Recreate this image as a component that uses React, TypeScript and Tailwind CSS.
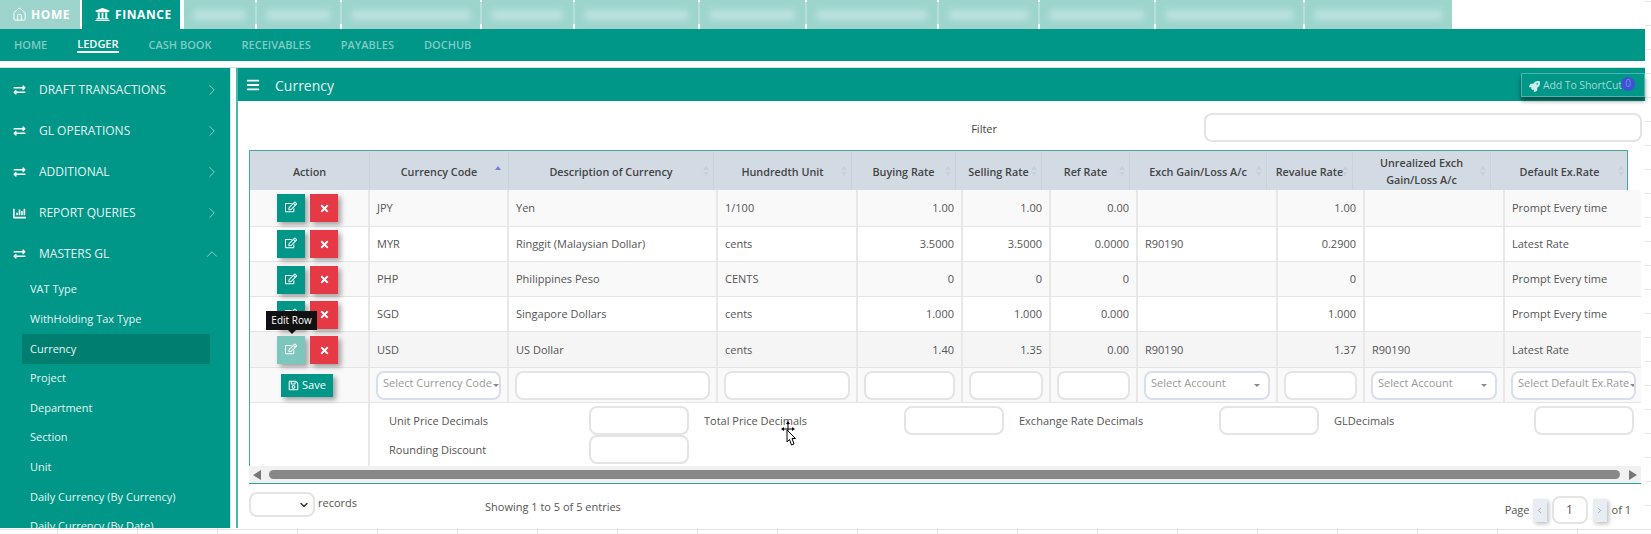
import React from "react";
import { FaBars, FaChartBar, FaExchangeAlt, FaRegEdit, FaRegSave, FaRocket, FaTimes, FaUniversity } from "react-icons/fa";
import { ChevronDown, ChevronLeft, ChevronRight, ChevronUp, House } from "lucide-react";

const navItems = ["HOME", "LEDGER", "CASH BOOK", "RECEIVABLES", "PAYABLES", "DOCHUB"];
const blurredTabs = [71, 83, 138, 91, 123, 105, 130, 99, 114, 147, 147];

const menuItems = [
  { label: "DRAFT TRANSACTIONS", chart: false },
  { label: "GL OPERATIONS", chart: false },
  { label: "ADDITIONAL", chart: false },
  { label: "REPORT QUERIES", chart: true },
];
const subItems = ["VAT Type", "WithHolding Tax Type", "Currency", "Project", "Department", "Section", "Unit", "Daily Currency (By Currency)", "Daily Currency (By Date)"];

const headers = ["Action", "Currency Code", "Description of Currency", "Hundredth Unit", "Buying Rate", "Selling Rate", "Ref Rate", "Exch Gain/Loss A/c", "Revalue Rate", "Unrealized Exch Gain/Loss A/c", "Default Ex.Rate"];

const rows = [
  { h: "h-[37px]", bg: "bg-[#f9f9f9]", btn: "", cells: ["JPY", "Yen", "1/100", "1.00", "1.00", "0.00", "", "1.00", "", "Prompt Every time"] },
  { h: "h-[35px]", bg: "bg-white", btn: "", cells: ["MYR", "Ringgit (Malaysian Dollar)", "cents", "3.5000", "3.5000", "0.0000", "R90190", "0.2900", "", "Latest Rate"] },
  { h: "h-[35px]", bg: "bg-[#f9f9f9]", btn: "pt-[1px]", cells: ["PHP", "Philippines Peso", "CENTS", "0", "0", "0", "", "0", "", "Prompt Every time"] },
  { h: "h-[35px]", bg: "bg-white", btn: "pt-[1px]", cells: ["SGD", "Singapore Dollars", "cents", "1.000", "1.000", "0.000", "", "1.000", "", "Prompt Every time"] },
  { h: "h-[36px]", bg: "bg-[#f5f5f5]", btn: "pt-[1px]", cells: ["USD", "US Dollar", "cents", "1.40", "1.35", "0.00", "R90190", "1.37", "R90190", "Latest Rate"] },
];
const numeric = [3, 4, 5, 7];

const inputRow = [
  "Select Currency Code", "", "", "", "", "", "Select Account", "", "Select Account", "Select Default Ex.Rate",
];

const decimals = ["Unit Price Decimals", "Total Price Decimals", "Exchange Rate Decimals", "GLDecimals"];

const TextBox = ({ className = "" }: { className?: string }) => (
  <div className={`h-[29px] rounded-[8px] border-2 border-[#e4e4e4] bg-white ${className}`} />
);

const SortIcon = ({ active }: { active?: boolean }) => (
  <svg width="6" height="12" viewBox="0 0 6 12" className={`absolute top-[14px] ${active ? "right-[7px]" : "right-[4px]"}`}>
    <path d="M3 1 L6 5 L0 5 Z" fill={active ? "#7a80d8" : "#c6d0da"} />
    {!active && <path d="M3 11 L6 7 L0 7 Z" fill="#c6d0da" />}
  </svg>
);

const ActionButtons = ({ faded, className = "" }: { faded?: boolean; className?: string }) => (
  <div className={`flex h-full items-center gap-[5px] pl-[27px] ${className}`}>
    <button className={`flex h-[28px] w-[28px] items-center justify-center text-white shadow-[3px_3px_5px_rgba(0,0,0,0.35)] ${faded ? "bg-[#7cc6bd]" : "bg-[#009688]"}`}>
      <FaRegEdit className="mb-[2px] text-[12px]" />
    </button>
    <button className="flex h-[28px] w-[28px] items-center justify-center bg-[#e63946] text-white shadow-[3px_3px_5px_rgba(0,0,0,0.35)]">
      <FaTimes className="text-[11px]" />
    </button>
  </div>
);

const MoveCursor = () => (
  <svg width="20" height="26" viewBox="0 0 20 26" className="absolute left-[778px] top-[421px]">
    <path d="M10 0 L12 3 H10.5 V7.5 H14 V6 L17 8 L14 10 V8.5 H10.5 V10 H9.5 V8.5 H6 V10 L3 8 L6 6 V7.5 H9.5 V3 H8 Z" fill="#000" />
    <path d="M9 9 V21 L11.5 18.5 L13.5 24 L16 23 L14 17.5 L17.5 17.5 Z" fill="#fff" stroke="#000" strokeWidth="1" />
  </svg>
);

export default function App() {
  return (
    <div className="relative h-[534px] w-[1651px] overflow-hidden bg-white bg-[linear-gradient(#e4e4e4_1px,transparent_1px),linear-gradient(90deg,#e4e4e4_1px,transparent_1px)] bg-[size:80px_24px] bg-[position:57px_1px] font-['Open_Sans',sans-serif] text-[11px] text-[#555]">
      <div className="flex h-[528px] w-[1645px] flex-col bg-white">
        {/* top tabs */}
        <div className="flex h-[29px] shrink-0 bg-white">
          <div className="flex w-[80px] items-center gap-[4px] bg-[#9dd5cd] pl-[12px] text-[12px] font-bold tracking-[0.6px] text-white">
            <House size={15} strokeWidth={1.5} />
            HOME
          </div>
          <div className="ml-[2px] flex w-[98px] items-center gap-[5px] bg-[#009688] pl-[13px] text-[12px] font-bold tracking-[0.6px] text-white">
            <FaUniversity className="text-[15px]" />
            FINANCE
          </div>
          <div className="ml-[4px] flex">
            {blurredTabs.map((w, i) => (
              <div key={i} className="flex">
                <div className="flex items-center justify-center overflow-hidden bg-[#9dd5cd] px-[10px]" style={{ width: w }}>
                  <div className="h-[10px] w-full bg-[#bde3de] blur-[3px]" />
                </div>
                {i < blurredTabs.length - 1 && (
                  <div className="flex w-[2px] flex-col justify-between bg-[#b5e0da]">
                    <div className="h-[2px] bg-white" />
                    <div className="h-[5px] bg-white" />
                  </div>
                )}
              </div>
            ))}
          </div>
        </div>

        {/* module nav */}
        <div className="flex h-[32px] shrink-0 items-center gap-[30px] bg-[#009688] pl-[14px] text-[11px] font-semibold text-[#80cbc4]">
          {navItems.map((item) => (
            <span key={item} className={item === "LEDGER" ? "border-b-2 border-white leading-[14px] text-white" : ""}>
              {item}
            </span>
          ))}
        </div>
        <div className="h-[7px] shrink-0 border-b border-[#cfe5e2] bg-white" />

        <div className="flex min-h-0 flex-1">
          {/* sidebar */}
          <aside className="w-[231px] shrink-0 overflow-hidden border-r border-[#cfe5e2] bg-[#009688] text-[#e6f5f3]">
            <div className="mt-[1px]">
              {menuItems.map((m) => (
                <div key={m.label} className="flex h-[41.2px] items-center pl-[13px] pr-[9px]">
                  {m.chart ? <FaChartBar className="w-[13px] text-[13px] text-white" /> : <FaExchangeAlt className="w-[13px] text-[12px] text-white" />}
                  <span className="ml-[13px] flex-1 text-[12px]">{m.label}</span>
                  <ChevronRight size={18} strokeWidth={1.1} className="text-[#a8dcd6]" />
                </div>
              ))}
              <div className="flex h-[41.2px] items-center pl-[13px] pr-[9px]">
                <FaExchangeAlt className="w-[13px] text-[12px] text-white" />
                <span className="ml-[13px] flex-1 text-[12px]">MASTERS GL</span>
                <ChevronUp size={18} strokeWidth={1.1} className="text-[#a8dcd6]" />
              </div>
              <div className="pl-[22px] pr-[20px]">
                {subItems.map((s) => (
                  <div key={s} className={`flex h-[29.6px] items-center pl-[8px] text-[11px] ${s === "Currency" ? "bg-[#007f70]" : ""}`}>
                    {s}
                  </div>
                ))}
              </div>
            </div>
          </aside>

          {/* main panel */}
          <main className="ml-[5px] flex min-w-0 flex-1 flex-col border-l-2 border-[#4db6ac] bg-white">
            <div className="flex h-[33px] shrink-0 items-center bg-[#009688] pl-[8px] text-white">
              <FaBars className="text-[14px]" />
              <span className="ml-[15px] pt-[1px] text-[14px] text-[#e6f5f3]">Currency</span>
              <div className="relative ml-auto flex h-[24px] w-[124px] items-center gap-[3px] border border-[#4db6ac] bg-[#009688] pl-[7px] pt-[3px] text-[10.5px] tracking-[-0.1px] text-[#a5d9d3] shadow-[0_4px_4px_rgba(0,0,0,0.45)]">
                <FaRocket className="text-[11px] text-[#d0ecea]" />
                Add To ShortCut
                <span className="absolute right-[9px] top-[3px] flex h-[14px] w-[14px] items-center justify-center rounded-full bg-[#3f51d5] text-[10px] text-[#7d8be0]">0</span>
              </div>
            </div>

            <div className="flex h-[49px] shrink-0 justify-end pr-[3px] pt-[12px]">
              <span className="mr-[207px] mt-[8px] text-[#444]">Filter</span>
              <TextBox className="w-[438px]" />
            </div>

            <div className="ml-[11px] flex w-[1392px] flex-col">
              {/* head */}
              <div className="grid h-[40px] w-[1379px] grid-cols-[120px_139px_205px_138px_104px_86px_88px_137px_86px_138px_137px] border border-b-0 border-[#4aa79c] bg-[#d2dbe4] text-[10.8px] font-semibold text-[#444]">
                {headers.map((h, i) => (
                  <div key={h} className="relative flex items-center justify-center border-r border-[#c9d3dd] px-[5px] pt-[1px] text-center leading-[17px] last:border-r-0">
                    {h}
                    {i > 0 && <SortIcon active={i === 1} />}
                  </div>
                ))}
              </div>

              {/* body */}
              <div className="relative border-l border-[#4aa79c]">
                {rows.map((row) => (
                  <div key={row.cells[0]} className={`grid grid-cols-[120px_139px_209px_140px_105px_88px_87px_140px_87px_140px_137px] border-b border-[#e4e4e4] ${row.h} ${row.bg}`}>
                    <div className="border-r-2 border-[#e8e8e8]">
                      <ActionButtons faded={row.cells[0] === "USD"} className={row.btn} />
                    </div>
                    {row.cells.map((c, i) => (
                      <div key={i} className={`flex items-center border-r-2 border-[#e8e8e8] px-[7px] pt-[1px] last:border-r-0 ${numeric.includes(i) ? "justify-end" : ""}`}>
                        {c}
                      </div>
                    ))}
                  </div>
                ))}

                {/* entry row */}
                <div className="grid h-[35px] grid-cols-[120px_139px_209px_140px_105px_88px_87px_140px_87px_140px_137px] border-b border-[#e4e4e4] bg-[#f9f9f9]">
                  <div className="flex items-center border-r-2 border-[#e8e8e8] pl-[31px]">
                    <button className="flex h-[23px] w-[52px] items-center justify-center gap-[3px] bg-[#009688] text-[11px] text-white shadow-[3px_3px_5px_rgba(0,0,0,0.35)]">
                      <FaRegSave className="text-[11px]" />
                      Save
                    </button>
                  </div>
                  {inputRow.map((ph, i) => (
                    <div key={i} className="flex items-center border-r-2 border-[#e8e8e8] px-[6px] last:border-r-0">
                      <div className={`flex h-[29px] w-full items-center justify-between overflow-hidden whitespace-nowrap rounded-[8px] border-2 bg-white px-[5px] pb-[3px] text-[#999] ${ph ? "border-[#d8deeb]" : "border-[#e4e4e4]"}`}>
                        {ph}
                        {ph && <span className="ml-[1px] mr-[3px] mt-[3px] h-0 w-0 border-x-[3px] border-t-[3px] border-x-transparent border-t-[#888]" />}
                      </div>
                    </div>
                  ))}
                </div>

                {/* decimals */}
                <div className="flex h-[63px]">
                  <div className="w-[120px] shrink-0 border-r-2 border-[#e8e8e8]" />
                  <div className="grid flex-1 grid-cols-[315px_315px_315px_315px] content-start pl-[19px] pt-[3px]">
                    {decimals.map((d) => (
                      <div key={d} className="flex h-[29px] items-center">
                        <span className="w-[200px] pt-[2px]">{d}</span>
                        <TextBox className="w-[100px]" />
                      </div>
                    ))}
                    <div className="flex h-[28px] items-center">
                      <span className="w-[200px] pt-[2px]">Rounding Discount</span>
                      <TextBox className="w-[100px]" />
                    </div>
                  </div>
                </div>

                {/* tooltip on the last row */}
                <div className="absolute left-[16px] top-[121px] flex h-[19px] w-[51px] items-center justify-center bg-[#111] text-[10px] text-white">
                  Edit Row
                  <span className="absolute -bottom-[4px] left-[22px] h-0 w-0 border-x-[4px] border-t-[4px] border-x-transparent border-t-[#111]" />
                </div>
              </div>

              {/* horizontal scrollbar */}
              <div className="flex h-[17px] items-center bg-[#f1f1f1] px-[4px]">
                <span className="h-0 w-0 border-y-[5px] border-r-[8px] border-y-transparent border-r-[#777]" />
                <div className="ml-[8px] mr-[9px] h-[9px] flex-1 rounded-full bg-[#888]" />
                <span className="h-0 w-0 border-y-[5px] border-l-[8px] border-y-transparent border-l-[#777]" />
              </div>

              {/* footer */}
              <div className="flex h-[44px] border-t border-[#26a69a]">
                <div className="mt-[8px] flex h-[25px] w-[66px] items-center justify-end rounded-[8px] border-2 border-[#e4e4e4] pr-[3px]">
                  <ChevronDown size={12} strokeWidth={3} className="text-[#333]" />
                </div>
                <span className="ml-[3px] mt-[11px]">records</span>
                <span className="ml-[128px] mt-[15px]">Showing 1 to 5 of 5 entries</span>
                <div className="ml-auto mr-[10px] mt-[12px] flex h-[28px] items-center">
                  <span className="mr-[3px]">Page</span>
                  <span className="flex h-[23px] w-[14px] items-center justify-center bg-[#e8ecf3] text-[#999] shadow-[2px_2px_4px_rgba(0,0,0,0.25)]">
                    <ChevronLeft size={9} />
                  </span>
                  <span className="ml-[5px] flex h-[28px] w-[36px] items-center justify-center rounded-[8px] border-2 border-[#e4e4e4] text-[12px]">1</span>
                  <span className="ml-[5px] flex h-[23px] w-[14px] items-center justify-center bg-[#e8ecf3] text-[#999] shadow-[2px_2px_4px_rgba(0,0,0,0.25)]">
                    <ChevronRight size={9} />
                  </span>
                  <span className="ml-[5px]">of 1</span>
                </div>
              </div>
            </div>
          </main>
        </div>
      </div>
      <MoveCursor />
    </div>
  );
}
